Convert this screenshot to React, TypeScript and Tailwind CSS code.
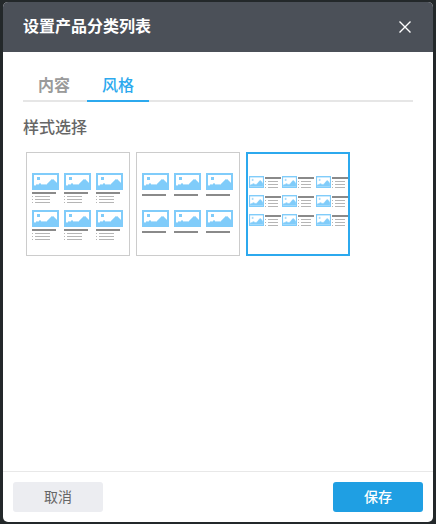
import React from "react";

const CJK = "font-['Liberation_Sans','Noto_Sans_CJK_SC',sans-serif]";

function Pic({ x, y, w, h, soft }: { x: number; y: number; w: number; h: number; soft?: boolean }) {
  return (
    <g transform={`translate(${x} ${y}) scale(${w / 27} ${h / 17})`} shapeRendering={soft ? "auto" : "crispEdges"}>
      <rect width="27" height="17" fill="#80ccfa" />
      <rect x="2" y="2" width="23" height="13" fill="#fff" />
      <rect x="5" y="4" width="3" height="3" fill={soft ? "#a9dcfa" : "#80ccfa"} />
      <path d="M2 12 L6 11 L8 10 L11 11.5 L14 11 L17 8 L20 5.5 L23 7.5 L25 10 V15 H2 Z" fill="#b5e1fb" />
      <path d="M2 13 L6 12 L8 11 L11 12.5 L14 12 L17 9 L20 6.5 L23 8.5 L25 11 V15 H2 Z" fill="#80ccfa" />
    </g>
  );
}

function Lines({ x, y, len, gap = 3 }: { x: number; y: number; len: number; gap?: number }) {
  return (
    <>
      {[0, 1, 2].map((i) => (
        <g key={i} shapeRendering="crispEdges">
          <rect x={x} y={y + i * gap} width="1" height="1" fill="#b5b5b5" />
          <rect x={x + 3} y={y + i * gap} width={len} height="1" fill="#b5b5b5" />
        </g>
      ))}
    </>
  );
}

function Thumb1({ lines }: { lines: boolean }) {
  const xs = [5, 37, 69];
  const ys = [20, 57];
  return (
    <svg width="102" height="102" viewBox="0 0 102 102" className="block">
      {ys.map((y) =>
        xs.map((x) => (
          <g key={`${x}-${y}`}>
            <Pic x={x} y={y} w={27} h={17} />
            <rect x={x} y={lines ? y + 19 : y + 21} width="24" height="2" fill="#8a8a8a" shapeRendering="crispEdges" />
            {lines && <Lines x={x} y={y + 23} len={15} />}
          </g>
        ))
      )}
    </svg>
  );
}

function Thumb3() {
  const xs = [1, 34, 68];
  const ys = [22, 41, 60];
  return (
    <svg width="100" height="100" viewBox="0 0 100 100" className="block">
      {ys.map((y) =>
        xs.map((x) => (
          <g key={`${x}-${y}`}>
            <Pic x={x} y={y} w={15} h={12} soft />
            <rect x={x + 16} y={y + 1} width="16" height="2" fill="#8a8a8a" shapeRendering="crispEdges" />
            <Lines x={x + 16} y={y + 5} len={10} />
          </g>
        ))
      )}
    </svg>
  );
}

export default function App() {
  return (
    <div className={`w-[436px] h-[524px] bg-[#23282a] pt-[2px] pb-[2px] px-[3px] ${CJK}`}>
      <div className="h-full flex flex-col bg-white rounded-[5px] overflow-hidden">
        <div className="h-[50px] shrink-0 bg-[#4b5058] flex items-center justify-between pl-5 pr-[22px]">
          <span className="text-white text-[16px] font-bold leading-[50px]">设置产品分类列表</span>
          <svg width="12" height="12" viewBox="0 0 12 12" fill="none" stroke="#fff" strokeWidth="1.4">
            <path d="M0.5 0.5 L11.5 11.5 M11.5 0.5 L0.5 11.5" />
          </svg>
        </div>
        <div className="flex-1 px-5 pt-[18px]">
          <div className="flex gap-[2px] border-b-2 border-[#e6e6e6] h-[32px]">
            <div className="px-[15px] h-[32px] leading-[32px] text-[16px] font-bold text-[#9a9a9a]">内容</div>
            <div className="px-[15px] h-[32px] leading-[32px] text-[16px] font-medium text-[#2ca9ee] border-b-2 border-[#2ca9ee]">风格</div>
          </div>
          <div className="mt-[14px] text-[16px] leading-[24px] font-medium text-[#666666]">样式选择</div>
          <div className="flex gap-[6px] ml-[3px] mt-[12px]">
            <div className="w-[104px] h-[104px] border border-[#cccccc]"><Thumb1 lines /></div>
            <div className="w-[104px] h-[104px] border border-[#cccccc]"><Thumb1 lines={false} /></div>
            <div className="w-[104px] h-[104px] border-2 border-[#2ca9ee]"><Thumb3 /></div>
          </div>
        </div>
        <div className="h-[51px] shrink-0 border-t border-[#e8e8e8] flex justify-between items-start pt-[10px] px-[10px]">
          <button className="w-[90px] h-[30px] rounded-[3px] bg-[#ecedf1] text-[#666666] text-[14px]">取消</button>
          <button className="w-[90px] h-[30px] rounded-[3px] bg-[#1f9fe3] text-white text-[14px] font-medium">保存</button>
        </div>
      </div>
    </div>
  );
}
